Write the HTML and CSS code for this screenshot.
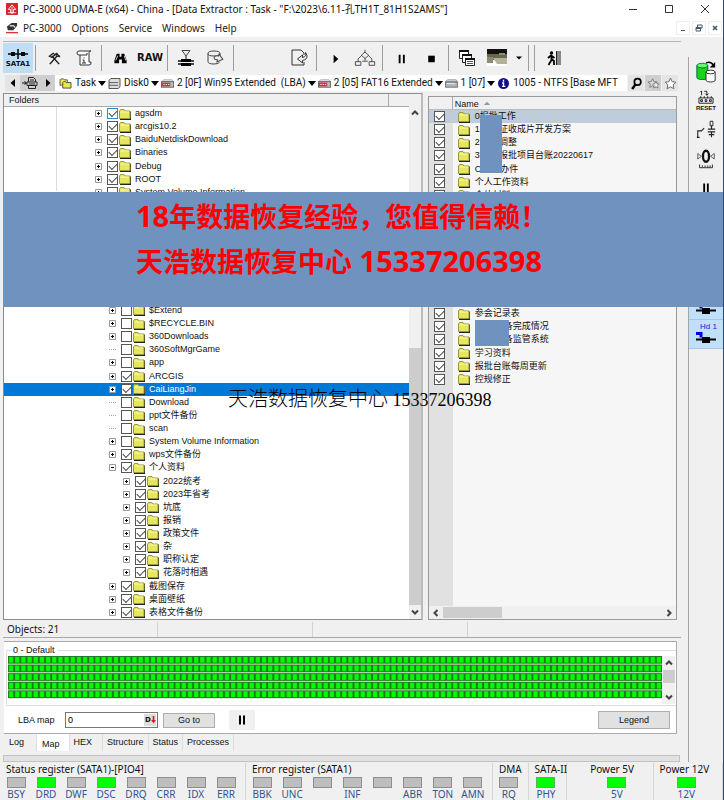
FILE: index.html
```html
<!DOCTYPE html>
<html lang="zh-CN">
<head>
<meta charset="utf-8">
<title>PC-3000 UDMA-E</title>
<link rel="stylesheet" href="styles.css">
</head>
<body>
<svg class="defs" aria-hidden="true">
  <symbol id="folder" viewBox="0 0 12 12"><path d="M1 11.5h10.500V3.500" fill="none" stroke="#222" stroke-width="1.200"/><path d="M.5 10.500V3l1-1.500h3.500l1 1.500h5v7.500z" fill="#e6e75c" stroke="#99993c"/><path d="M1.500 4h8.500" stroke="#fcfcae"/></symbol>
  <symbol id="pause" viewBox="0 0 12 12"><path d="M3 1.500h2v9H3zM7 1.500h2v9H7z"/></symbol>
  <symbol id="drive" viewBox="0 0 14 10"><path d="M3 1h9l1.500 2H.5z" fill="#ddd" stroke="#777" stroke-width=".7"/><path d="M.5 3.500h13V9H.5z" fill="#b5b5b5" stroke="#555" stroke-width=".8"/><path d="M2 5h9" stroke="#eee"/></symbol>
  <symbol id="part" viewBox="0 0 14 10"><path d="M3 1h9l1.500 2H.5z" fill="#eee" stroke="#888" stroke-width=".7"/><rect x=".5" y="3" width="13" height="6" fill="#bbb" stroke="#666"/><rect x="1" y="4" width="9" height="4" fill="#c33"/><path d="M2.500 6h1.500M5 6h1.500M7.500 6h1.500" stroke="#fff"/></symbol>
  <symbol id="plug" viewBox="0 0 24 14"><path d="M2 2.500h5v4" fill="none" stroke="#0000dd" stroke-width="3"/><path d="M2 8.500h20" stroke="#000" stroke-width="2"/><rect x="8" y="6" width="8" height="6"/></symbol>
</svg>
<div class="window">
  <header class="titlebar">
    <svg class="logo" viewBox="0 0 13 13"><rect width="13" height="13" rx="1" fill="#d8242c"/><path d="M6.500 2l4 5H8v3.500H5V7H2.500z" fill="none" stroke="#fff"/><path d="M6.500 4v8M2 10.500h9" stroke="#fff" stroke-width=".8"/></svg>
    <h1>PC-3000 UDMA-E (x64) - China - [Data Extractor : Task - "F:\2023\6.11-孔TH1T_81H1S2AMS"]</h1>
    <div class="winbtns">
      <button aria-label="Minimize"><svg viewBox="0 0 10 10"><path d="M1 5.500h8"/></svg></button>
      <button aria-label="Maximize"><svg viewBox="0 0 10 10"><path d="M1.500 1.500h7v7h-7z"/></svg></button>
      <button aria-label="Close"><svg viewBox="0 0 10 10"><path d="M1 1l8 8M9 1l-8 8"/></svg></button>
    </div>
  </header>
  <nav class="menubar">
    <svg class="logo" viewBox="0 0 13 13"><path d="M1 5l5-4h6v3L8 9H2z" fill="#333"/><path d="M4 4h4l2 2" stroke="#ccc" fill="none" stroke-width="1.500"/><path d="M0 11.500h13" stroke="#d33" stroke-width="1.500"/></svg>
    <a href="#">PC-3000</a><a href="#">Options</a><a href="#">Service</a><a href="#">Windows</a><a href="#">Help</a>
    <div class="mdibtns">
      <button aria-label="Minimize child"><svg viewBox="0 0 10 10"><path d="M3 7.500h4"/></svg></button>
      <button aria-label="Restore child"><svg viewBox="0 0 10 10"><path d="M3.500 4V2h4.500v3H7M2 4.500h4.500v3.500H2zM2 5.500h4"/></svg></button>
      <button aria-label="Close child"><svg viewBox="0 0 10 10"><path d="M3 3l4 4M7 3l-4 4" stroke-width="1.500"/></svg></button>
    </div>
  </nav>
  <div class="body">
    <main class="main">
      <div class="toolbar">
        <button class="active sata"><svg viewBox="0 0 24 12"><path d="M2 6h20M12 1v10" stroke="#000" stroke-width="1.500"/><path d="M5 4h4v4H5zM15 4h4v4h-4z"/></svg><span>SATA1</span></button>
        <i></i>
        <button aria-label="Tools"><svg viewBox="0 0 16 16"><path d="M3 14l8-9M13 14L5 5" stroke="#222" stroke-width="1.600"/><path d="M2.500 5.500l4-3 2 1.500-3 3zM10 5l-.5-3M10.500 5.500L14 6M10 2l1.500 2 2 1.500" fill="none" stroke="#222" stroke-width="1.400"/></svg></button>
        <button aria-label="Script" class="lg"><svg viewBox="0 0 18 18"><path d="M5 6V16h9q2.500 0 2-3h-2V3.500Q14 2 16 2H4Q2 2 2 4t2 2h8V4" fill="#fff" stroke="#333"/><path d="M9 8.500v1M7.500 11H9v3M7 14h4" stroke="#333" fill="none"/></svg></button>
        <i></i>
        <button aria-label="Find"><svg viewBox="0 0 16 16"><path d="M4 3h3v3h2V3h3l2.500 7v3h-5V9h-3v4h-5v-3z"/><path d="M5 5l-2 5M12 5l1.500 5" stroke="#ddd"/></svg></button>
        <button class="raw">RAW</button>
        <i></i>
        <button aria-label="Map builder" class="lg"><svg viewBox="0 0 18 18"><path d="M5 1.500h8L9 7z" fill="#eee" stroke="#444"/><path d="M9 7v3" stroke="#111"/><path d="M1 12h16M1 15h16" stroke="#111" stroke-width="1.500"/><path d="M4 10h10v3H4zM4 14h10v3H4z"/></svg></button>
        <button aria-label="Image" class="lg"><svg viewBox="0 0 18 18"><path d="M1 4.500v8q0 2.500 6 2.500 3.500 0 5.500-1.500M1 4.500Q1 2 7 2t6 2.500Q13 7 7 7T1 4.500M13 4.500V7" fill="none" stroke="#444"/><path d="M7 9.500Q8 7 11 7V5l5 4-5 4v-2H8z" transform="rotate(15 11 9)" fill="#eee" stroke="#444"/></svg></button>
        <i></i><span class="space"></span>
        <button aria-label="Export" class="lg"><svg viewBox="0 0 18 18"><path d="M14 6V4l-3-3H2v15h12v-3" fill="none" stroke="#333"/><path d="M15.500 3.500q1.500 4-3 5V6L7.500 10l5 4v-2.500q5-1 4.500-5z" fill="#eee" stroke="#333"/></svg></button>
        <i></i>
        <button aria-label="Run"><svg viewBox="0 0 16 16"><path d="M6 4l5 4.500L6 13z"/></svg></button>
        <button aria-label="Flow" class="xl"><svg viewBox="0 0 24 18"><path d="M12 0v3M12 9v3M1.500 13h6v4h-6zM16.500 13h6v4h-6zM4.500 13V10l4-4M19.500 13V10l-4-4M8 6l4-3.500L16 6l-4 3.500zM9 12.500h6" fill="none" stroke="#444"/></svg></button>
        <i></i>
        <button aria-label="Pause"><svg viewBox="0 0 16 16"><path d="M5 4h2v9H5zM9.500 4h2v9h-2z"/></svg></button>
        <button aria-label="Stop"><svg viewBox="0 0 16 16"><path d="M4.500 5h7v7h-7z"/></svg></button>
        <i></i>
        <button aria-label="Windows" class="lg"><svg viewBox="0 0 18 18"><g fill="#fff" stroke="#222"><path d="M1.500 1.500h9v8h-9z"/><path d="M4.500 5.500h9v8h-9z"/><path d="M7.500 9.500h9v7h-9z"/></g><path d="M1 2h10M4 6h10M7 10h10" stroke="#111" stroke-width="2"/><path d="M9 12.500h6M9 14.500h6" stroke="#555"/></svg></button>
        <button aria-label="Picture" class="xl"><svg viewBox="0 0 20 20"><path d="M0 2h20v16H0z" fill="#fff"/><path d="M0 1h20v6H0z" fill="#111"/><path d="M0 6h20v6H0z" fill="#68684a"/><path d="M0 9h6v6H0z" fill="#8c8c70"/><path d="M6 10h14v6H10z" fill="#b2b29a"/><path d="M12 5h6v2h-6z" fill="#8d8d76"/></svg></button>
        <button class="narrow" aria-label="Picture options"><svg viewBox="0 0 6 6"><path d="M0 1.500h6L3 4.500z"/></svg></button>
        <i></i><i></i>
        <button aria-label="Exit" class="lg"><svg viewBox="0 0 18 18"><path d="M13 2h4v14h-4z" fill="#888"/><path d="M12.500 2v14" stroke="#222"/><circle cx="7.500" cy="4" r="1.700"/><path d="M7.500 6v5l-3 5M7.500 10l2.500 2v4M4 9l3-2.500L10.500 9" stroke="#000" stroke-width="1.800" fill="none"/></svg></button>
      </div>
      <div class="address">
        <button aria-label="Back"><svg viewBox="0 0 10 10"><path d="M7 1v8L2.500 5z"/></svg></button>
        <button class="dark wide" aria-label="History"><svg viewBox="0 0 16 12"><path d="M0 6h4M2.500 4.500L4.500 6 2.500 7.500" stroke="#111" fill="none"/><path d="M6.500 5V.500h5l2 2V5M6.500 8v3.500h7V8M5 5h10v3.500H5zM8 3h4M7 7h6" fill="none" stroke="#222"/></svg></button>
        <button class="dark" aria-label="Forward"><svg viewBox="0 0 10 10"><path d="M3 1v8l4.500-4z"/></svg></button>
        <ol class="crumbs">
          <li><svg viewBox="0 0 14 12"><path d="M1 8V2l1-1h3l1 1h3v5z" fill="#eae74f" stroke="#555"/><path d="M4 11V5l1-1h2l1 1h5v6z" fill="#eae74f" stroke="#444"/></svg>Task<b></b></li>
          <li><svg viewBox="0 0 14 12"><path d="M3 .5h10v9l-2 2H1v-9z" fill="#ddd" stroke="#444"/><path d="M1 5h10M1 8h10" stroke="#555"/></svg>Disk0<b></b></li>
          <li><svg viewBox="0 0 14 10"><use href="#part"/></svg>2 [0F] Win95 Extended&nbsp; (LBA)<b></b></li>
          <li><svg viewBox="0 0 14 10"><use href="#part"/></svg>2 [05] FAT16 Extended<b></b></li>
          <li><svg viewBox="0 0 14 10"><use href="#drive"/></svg>1 [07]<b></b></li>
          <li><svg viewBox="0 0 12 12"><circle cx="6" cy="6" r="6" fill="#10108c"/><path d="M6 2v2M4.500 5.500H6V9M4.500 9.200h3.500" stroke="#fff" stroke-width="1.500" fill="none"/></svg>1005 - NTFS [Base MFT</li>
        </ol>
        <button class="tool" aria-label="Search"><svg viewBox="0 0 12 12"><circle cx="7" cy="4.500" r="3" fill="none" stroke="#000" stroke-width="1.500"/><path d="M5 7L2 11" stroke="#000" stroke-width="2.200"/></svg></button>
        <button class="tool dark" aria-label="Favorites"><svg viewBox="0 0 14 12"><path d="M6 1l1.500 3 3.500.5-2.500 2.300.6 3.400L6 8.500l-3 1.700.6-3.400L1 4.500 4.500 4z" fill="#ddd" stroke="#666" stroke-width=".8"/><path d="M9.500 4l1.200 2.200 2.500.3-1.800 1.800.4 2.600-2.300-1.200-2.300 1.200.4-2.600L6 6.500l2.400-.3z" fill="#eee" stroke="#666" stroke-width=".8"/></svg></button>
        <button class="tool" aria-label="Add favorite"><svg viewBox="0 0 12 12"><path d="M6 1l1.500 3.300 3.500.5-2.500 2.400.6 3.600L6 9.100l-3.100 1.700.6-3.600L1 4.800l3.500-.5z" fill="#fff" stroke="#667" stroke-width=".9"/></svg></button>
      </div>
      <div class="panels">
        <section class="folders">
          <div class="tree-col">
            <div class="tree-head"><span>Folders</span></div>
            <div class="tree" id="tree"></div>
          </div>
          <div class="vscroll"><svg viewBox="0 0 8 8"><path d="M1 5.500l3-3 3 3"/></svg><span class="before"></span><span class="thumb"></span><svg viewBox="0 0 8 8"><path d="M1 2.500l3 3 3-3"/></svg></div>
        </section>
        <section class="files">
          <div class="files-head"><span></span><span>Name <svg viewBox="0 0 8 5"><path d="M0 5l4-4 4 4z"/></svg></span></div>
          <div class="list" id="list"></div>
          <div class="hscroll"><svg viewBox="0 0 8 8"><path d="M5.500 1l-3 3 3 3"/></svg><span class="thumb"></span><svg viewBox="0 0 8 8"><path d="M2.500 1l3 3-3 3"/></svg></div>
        </section>
      </div>
      <div class="statusbar"><span>Objects: 21</span><span></span><span></span><span></span></div>
      <section class="map">
        <fieldset>
          <legend>0 - Default</legend>
          <div class="map-row">
            <svg class="cells" viewBox="0 0 636 45" preserveAspectRatio="none"><defs><pattern id="cell" width="6" height="9" patternUnits="userSpaceOnUse"><rect width="6" height="9" fill="#dcebd6"/><rect width="6" height="8" fill="#1f7a1f"/><rect x="1" y="1" width="4" height="6" fill="#00ff00"/></pattern></defs><rect width="636" height="45" fill="url(#cell)"/></svg>
            <div class="vscroll"><svg viewBox="0 0 8 8"><path d="M1 5.500l3-3 3 3"/></svg><span class="thumb"></span><span class="rest"></span><svg viewBox="0 0 8 8"><path d="M1 2.500l3 3 3-3"/></svg></div>
          </div>
        </fieldset>
        <div class="lba">
          <label for="lba">LBA map</label>
          <div class="field"><input id="lba" type="text" value="0"><button aria-label="Decimal"><span>D</span><svg viewBox="0 0 6 10"><path d="M2 0h2v5h2L3 9 0 5h2z"/></svg></button></div>
          <button class="btn">Go to</button>
          <button class="pausebtn" aria-label="Pause map"><svg viewBox="0 0 12 12"><use href="#pause"/></svg></button>
          <button class="btn legendbtn">Legend</button>
        </div>
      </section>
      <div class="tabs"><button>Log</button><button class="on">Map</button><button>HEX</button><button>Structure</button><button>Status</button><button>Processes</button></div>
      <div class="splitter"></div>
    </main>
    <aside class="side">
      <button aria-label="Databases"><svg viewBox="0 0 24 24"><path d="M2 5v13c0 3 12 3 12 0V5z" fill="#19d419" stroke="#064"/><ellipse cx="8" cy="5" rx="6" ry="2.500" fill="#6f6" stroke="#064"/><path d="M12 12v9c0 2.500 10 2.500 10 0v-9z" fill="#fff" stroke="#222"/><ellipse cx="17" cy="12" rx="5" ry="2" fill="#fff" stroke="#222"/><path d="M12 2q6-2 8 3" fill="none" stroke="#000" stroke-width="1.500"/><path d="M22 1v6h-6z"/></svg></button>
      <button aria-label="Reset" class="reset"><svg viewBox="0 0 20 17"><path d="M5 1v5M3.500 2.500L5 1M8 1.500h3V6M9 4l2 2 2-2M2 9h16v6H2zM4 11v2h2v-2zM9 11v2h2v-2zM14 11v2h2v-2zM4 7v2M8 7v2M12 7v2M16 7v2" fill="none" stroke="#111"/></svg><span>RESET</span></button>
      <button aria-label="Signal"><svg viewBox="0 0 24 24"><path d="M3 20v-7h4l3-3M2 20h3M14 11h8M14 14h8M18 7v4M18 14v6M15 17h6" fill="none" stroke="#222" stroke-width="1.200"/><path d="M16.500 2.500h3v5h-3z" fill="none" stroke="#222"/></svg></button>
      <button aria-label="Zero"><svg viewBox="0 0 24 24"><ellipse cx="12" cy="9" rx="3.300" ry="6" fill="none" stroke="#111" stroke-width="2.500"/><path d="M3 6l4 3-4 3zM21 6l-4 3 4 3z" fill="none" stroke="#555"/><path d="M5 18v3.500h14V18M8 19v2M11 19v2M14 19v2M16.500 19v2" fill="none" stroke="#222"/></svg></button>
      <button aria-label="Pause device"><svg viewBox="0 0 24 24"><path d="M9 7h2v10H9zM13 7h2v10h-2z"/></svg></button>
      <span class="gap"></span>
      <button class="hd" aria-label="Hd 0"><span></span><svg viewBox="0 0 24 14"><use href="#plug"/></svg></button>
      <button class="hd"><span>Hd 1</span><svg viewBox="0 0 24 14"><use href="#plug"/></svg></button>
    </aside>
  </div>
  <footer class="registers" id="registers"></footer>
  <div class="banner"><p><em>18</em>年数据恢复经验，您值得信赖！</p><p>天浩数据恢复中心<em> 15337206398</em></p></div>
  <p class="watermark">天浩数据恢复中心<em> 15337206398</em></p>
</div>
<script src="app.js"></script>
</body>
</html>
```
FILE: styles.css
```css
* { box-sizing: border-box; }
body { margin: 0; background: #f0f0f0; color: #111; font: 10px/14px "Noto Sans", "Noto Sans CJK SC", sans-serif; }
button { border: 0; padding: 0; background: none; font: inherit; color: inherit; }
p, h1 { margin: 0; }
em { font-style: normal; }
.defs { position: absolute; width: 0; height: 0; }
.window { position: relative; display: flex; flex-direction: column; min-height: 100vh; border-right: 1px solid #2b4a7c; overflow: hidden; }

.titlebar, .menubar { display: flex; align-items: center; background: #fff; padding-left: 6px; }
.titlebar { height: 18px; }
.menubar { height: 19px; }
.logo { width: 12px; height: 12px; flex: none; }
.titlebar h1 { flex: 1; margin-left: 5px; font-size: 10px; font-weight: 400; white-space: nowrap; }
.winbtns { display: flex; }
.winbtns button { width: 36px; height: 18px; }
.winbtns svg, .mdibtns svg { width: 10px; height: 10px; fill: none; stroke: #333; display: block; margin: auto; }
.menubar a { color: #222; text-decoration: none; margin-left: 5px; margin-right: 5px; }
.menubar .mdibtns { margin-left: auto; display: flex; gap: 2px; padding-right: 1px; }
.mdibtns button { width: 14px; height: 14px; border: 1px solid #eee; }
.mdibtns svg { stroke: #456; }

.body { flex: 1; display: flex; margin-top: 4px; }
.main { flex: 1; min-width: 0; display: flex; flex-direction: column; padding-left: 3px; }
.side { width: 35px; margin: 16px 0 0 7px; border-left: 1px solid #a5a5a5; display: flex; flex-direction: column; }

.toolbar { display: flex; align-items: stretch; height: 32px; border-top: 1px solid #b5b5b5; padding-top: 1px; }
.toolbar button { width: 30px; display: flex; flex-direction: column; align-items: center; justify-content: center; }
.toolbar svg { width: 15px; height: 15px; }
.toolbar .lg svg { width: 18px; height: 18px; }
.toolbar .xl svg { width: 22px; height: 20px; }
.toolbar i { width: 1px; margin: 2px 3px 2px 2px; background: #9c9c9c; }
.toolbar .space { width: 47px; }
.toolbar .active { background: #bfddf5; }
.toolbar .sata { font: bold 7px/8px "DejaVu Sans", sans-serif; }
.toolbar .sata svg { width: 24px; height: 12px; }
.toolbar .raw { font: bold 10px/14px "DejaVu Sans", sans-serif; }
.toolbar .narrow { width: 14px; }
.toolbar .narrow svg { width: 6px; height: 6px; }

.address { display: flex; align-items: center; height: 20px; padding: 2px 3px 2px 2px; }
.address button { width: 15px; height: 16px; flex: none; display: flex; align-items: center; justify-content: center; background: #e4e4e4; }
.address button.dark { background: #cfcfcf; }
.address button.wide { width: 20px; }
.address button svg { width: 10px; height: 10px; }
.address button.wide svg { width: 16px; height: 12px; }
.address button.tool { width: 16px; margin-left: 1px; }
.address button.tool svg { width: 13px; height: 13px; }
.crumbs { flex: 1; min-width: 0; overflow: hidden; display: flex; align-items: center; height: 16px; margin: 0; padding: 0 0 0 4px; list-style: none; background: #fff; font-family: Roboto, sans-serif; white-space: nowrap; }
.crumbs li { display: flex; align-items: center; }
.crumbs svg { width: 13px; height: 11px; margin: 0 3px 0 0; }
.crumbs b { border: 4px solid transparent; border-top: 5px solid #000; border-bottom: 0; margin: 0 2px; }

.panels { flex: 1; display: flex; gap: 5px; padding-right: 4px; }
.folders, .files, .map, .tabs { font: 9px/13px "Liberation Sans", "Noto Sans CJK SC", sans-serif; }
.folders { flex: 420; min-width: 0; display: flex; border: 1px solid #8c8c8c; border-width: 1px 2px 1px 1px; border-right-color: #bbb; background: #fff; }
.tree-col { flex: 1; min-width: 0; display: flex; flex-direction: column; }
.tree-head { height: 13px; background: #f0f0f0; border-bottom: 1px solid #aaa; display: flex; }
.tree-head span { flex: 1; margin-right: 20px; padding-left: 5px; border-right: 1px solid #aaa; }
.tree { flex: 1; display: flex; flex-direction: column; background: linear-gradient(#dcdcdc, #dcdcdc) 52px 0 / 1px 84px no-repeat; }
.rows { display: flex; flex-direction: column; flex: var(--n) 0 0px; min-height: 0; }
.node { flex: 1 0 0px; min-height: 0; display: flex; align-items: center; white-space: nowrap; }
.level1 { padding-left: 91px; }
.level2 { padding-left: 105px; }
.level3 { padding-left: 119px; }
.twig { width: 7px; height: 7px; margin-right: 5px; flex: none; }
.twig.none { border-top: 1px dotted #aaa; height: 1px; }
.folder { width: 12px; height: 12px; flex: none; }
.node .folder { margin: 0 4px 0 1px; }
.node.selected { background: #0078d7; color: #fff; }
.node label { flex: 1; }
input[type="checkbox"] { appearance: none; flex: none; width: 11px; height: 11px; margin: 0; border: 1px solid #555; background: #fff; position: relative; }
input[type="checkbox"]:checked::before { content: ""; position: absolute; left: 1px; top: 1px; width: 7px; height: 4px; border: solid #444; border-width: 0 0 1px 1px; transform: rotate(-45deg); }
.first input[type="checkbox"] { border-color: #2a8ae0; }
.vscroll { width: 12px; background: #f0f0f0; display: flex; flex-direction: column; align-items: center; }
.vscroll svg, .hscroll svg { width: 8px; height: 8px; margin: 3px; fill: none; stroke: #444; stroke-width: 2; flex: none; }
.folders .vscroll { padding-top: 12px; }
.before { flex: 228; }
.vscroll .thumb { flex: 257; width: 12px; background: #cdcdcd; }

.files { flex: 249; min-width: 0; display: flex; flex-direction: column; margin-top: 3px; border: 1px solid #999; background: #f6f6f6; }
.files-head { display: flex; height: 13px; background: #f0f0f0; border-bottom: 1px solid #bbb; }
.files-head span:first-child { width: 24px; border-right: 1px solid #aaa; }
.files-head span:last-child { padding-left: 2px; line-height: 14px; }
.files-head svg { width: 8px; height: 4px; fill: #999; margin-left: 2px; vertical-align: 2px; }
.list { flex: 1; background: linear-gradient(#e1e1e1, #e1e1e1) 0 0 / 24px 100% no-repeat; }
.list-rows { height: 276px; display: flex; flex-direction: column; }
.item { flex: 1 0 0px; min-height: 0; display: flex; align-items: center; padding-left: 5px; white-space: nowrap; }
.item .folder { margin: 0 5px 0 13px; }
.item.current { background: #bfcddb; }
.item label { position: relative; }
.gapbox { display: inline-block; width: 19px; }
.gapbox.broad { width: 29px; }
.mask { position: absolute; z-index: 1; background: #6f92be; }
.mask.tall { left: 5px; top: 5px; width: 22px; height: 58px; }
.mask.wide { left: 0; top: 0; width: 34px; height: 26px; }
.hscroll { height: 13px; display: flex; align-items: center; background: #f0f0f0; }
.hscroll .thumb { width: 59px; height: 11px; background: #cdcdcd; }
.hscroll svg:last-child { margin-left: auto; }

.statusbar { display: flex; height: 17px; margin-top: 1px; padding-top: 1px; border-bottom: 1px solid #a8a8a8; }
.statusbar span { width: 155px; padding-left: 4px; border-right: 1px solid #d2d2d2; }
.statusbar span:last-child { flex: 1; border: 0; }

.map { margin: 3px 4px 0 1px; padding: 2px 0 3px; background: #fff; border: 1px solid #aaa; border-left: 0; }
.map fieldset { min-width: 0; margin: 0 0 0 2px; padding: 0 1px 1px; border: 1px solid #ddd; border-right: 0; }
.map legend { padding: 0 3px; margin-left: 2px; line-height: 12px; }
.map-row { display: flex; height: 48px; }
.cells { flex: 1; min-width: 0; height: 43px; }
.map-row .vscroll { width: 13px; }
.map-row .vscroll .thumb { flex: none; height: 13px; }
.rest { flex: 1; }
.lba { display: flex; align-items: center; padding: 4px 6px 0 14px; height: 24px; }
.lba label { width: 47px; }
.field { display: flex; width: 93px; height: 16px; border: 1px solid #777; background: #fff; }
.field input { flex: 1; min-width: 0; border: 0; padding: 0 2px; font: inherit; background: none; }
.field button { display: flex; align-items: center; width: 12px; margin: 1px; padding-left: 1px; background: #ddd; font: bold 7px/10px "DejaVu Sans", sans-serif; }
.field svg { width: 5px; height: 8px; fill: #e01818; }
.btn { width: 52px; height: 15px; margin-left: 5px; background: #e1e1e1; border: 1px solid #adadad; }
.pausebtn { width: 26px; height: 20px; margin-left: 14px; background: #f0f0f0; }
.pausebtn svg { width: 12px; height: 12px; display: block; margin: auto; }
.legendbtn { width: 72px; height: 18px; margin-left: auto; }

.tabs { display: flex; height: 17px; padding-left: 1px; }
.tabs button { padding: 0 4px; border-right: 1px solid #ddd; }
.tabs button:first-child { padding: 0 12px 0 5px; }
.tabs button.on { padding: 3px 9px 0 5px; background: #fff; }
.tabs button:nth-child(3) { padding-right: 10px; }
.splitter { height: 7px; margin: 4px 1px 0 0; background: #e2e2e2; border: 1px solid #c2c2c2; }

.side button { width: 34px; height: 29px; display: flex; flex-direction: column; align-items: center; justify-content: center; }
.side svg { width: 22px; height: 24px; flex: none; }
.side .reset svg { width: 20px; height: 15px; }
.side .reset { font: bold 6px/6px "Liberation Sans", sans-serif; }
.side .gap { height: 89px; }
.side .hd { background: #bfe0f8; border-bottom: 1px solid #a2c8e8; color: #1616dd; font: 8px/8px "Liberation Sans", sans-serif; }
.side .hd span { align-self: flex-end; height: 8px; padding-right: 6px; }
.side .hd svg { width: 24px; height: 14px; }

.registers { display: flex; height: 37px; margin-top: 1px; line-height: 12px; }
.group { min-width: 0; border-right: 1px solid #d6d6d6; }
.group h2 { margin: 0 0 2px 6px; font-size: 10px; line-height: 12px; font-weight: 400; white-space: nowrap; }
.leds { display: flex; padding: 0 4px 0 1px; }
.led { flex: 1; min-width: 0; display: flex; flex-direction: column; align-items: center; color: #2f5590; }
.led::before { content: ""; width: 17px; height: 9px; background: #bebebe; border: 1px solid #8e8e8e; }
.led.on::before { background: #00ff00; border-color: #5bb45b; }
.spacer { flex: 17; }

.banner { position: absolute; top: 192px; left: 3px; right: 0; height: 115px; padding: 2px 0 0 133px; background: #6f92be; color: #f00; font: bold 27px/45px "Noto Sans", "Noto Sans CJK SC", sans-serif; white-space: nowrap; }
.banner em { font-size: 29px; line-height: 1; }
.watermark { position: absolute; left: 228px; top: 385px; color: #000; font: 20px/26px "Noto Sans CJK SC", sans-serif; font-weight: 300; white-space: nowrap; }
.watermark em { font: 18px/18px "Liberation Serif", serif; }
```
FILE: app.js
```js
const folderIcon = '<svg class="folder"><use href="#folder"/></svg>';
const twig = (kind) => kind === '.'
  ? '<span class="twig none"></span>'
  : `<svg class="twig" viewBox="0 0 7 7"><path d="M.5.5h6v6h-6z" fill="#fff" stroke="#999"/><path d="M2 3.500h3${kind === '+' ? 'M3.500 2v3' : ''}" stroke="#000"/></svg>`;

// [level, twig, checked, name]
const top1 = ['agsdm', 'arcgis10.2', 'BaiduNetdiskDownload', 'Binaries', 'Debug', 'ROOT']
  .map((name) => [1, '+', 1, name]);
top1.push([1, '+', 0, 'System Volume Information']);
const lower = [
  [2, '+', 0, '$Extend'], [2, '+', 0, '$RECYCLE.BIN'], [2, '+', 0, '360Downloads'],
  [2, '.', 0, '360SoftMgrGame'], [2, '+', 0, 'app'], [2, '+', 1, 'ARCGIS'],
  [2, '+', 1, 'CaiLiangJin'], [2, '.', 0, 'Download'], [2, '.', 0, 'ppt文件备份'],
  [2, '.', 0, 'scan'], [2, '+', 0, 'System Volume Information'], [2, '+', 1, 'wps文件备份'],
  [2, '-', 1, '个人资料'], [3, '+', 1, '2022统考'], [3, '+', 1, '2023年省考'],
  [3, '+', 1, '坑底'], [3, '+', 1, '报销'], [3, '+', 1, '政策文件'], [3, '+', 1, '杂'],
  [3, '+', 1, '职称认定'], [3, '+', 1, '花落时相遇'], [2, '+', 1, '截图保存'],
  [2, '+', 1, '桌面壁纸'], [2, '+', 1, '表格文件备份'],
];
let id = 0;
const node = ([level, kind, checked, name]) => {
  id += 1;
  const cls = (name === 'CaiLiangJin' ? ' selected' : '') + (id === 1 ? ' first' : '');
  return `<div class="node level${level}${cls}">${twig(kind)}<input type="checkbox" id="n${id}"${checked ? ' checked' : ''}>${folderIcon}<label for="n${id}">${name}</label></div>`;
};
const rows = (n, html) => `<div class="rows" style="--n:${n}">${html}</div>`;
document.getElementById('tree').innerHTML =
  rows(7, top1.map(node).join('')) + rows(8, '') + rows(24, lower.map(node).join(''));

const item = (name, mask = '') => {
  id += 1;
  return `<div class="item${name.startsWith('0报') ? ' current' : ''}"><input type="checkbox" id="n${id}" checked>${folderIcon}<label for="n${id}">${name}${mask}</label></div>`;
};
const gap = '<span class="gapbox"></span>';
const broadGap = '<span class="gapbox broad"></span>';
const files1 = [
  item('0报批工作', '<span class="mask tall"></span>'), item(`1${gap}征收成片开发方案`),
  item(`2${gap}调整`), item(`3${gap}报批项目台账20220617`), item(`C${gap}办件`),
  item('个人工作资料'), item('个体材料'),
];
const files2 = [
  item('参会记录表'), item(`${broadGap}备完成情况`, '<span class="mask wide"></span>'),
  item(`${broadGap}备监管系统`), item('学习资料'), item('报批台账每周更新'), item('控规修正'),
];
document.getElementById('list').innerHTML =
  `<div class="list-rows">${rows(7, files1.join(''))}${rows(8, '')}${rows(6, files2.join(''))}</div>`;

const groups = [
  ['Status register (SATA1)-[PIO4]', 247, ['BSY', '*DRD', 'DWF', '*DSC', 'DRQ', 'CRR', 'IDX', 'ERR']],
  ['Error register (SATA1)', 248, ['BBK', 'UNC', '', 'INF', '', 'ABR', 'TON', 'AMN']],
  ['DMA', 35, ['RQ']], ['SATA-II', 38, ['*PHY']], null,
  ['Power 5V', 69, ['*5V']], ['Power 12V', 69, ['*12V']],
];
document.getElementById('registers').innerHTML = groups.map((g) => {
  if (!g) return '<span class="spacer"></span>';
  const leds = g[2].map((s) => `<span class="led${s[0] === '*' ? ' on' : ''}">${s.replace('*', '')}</span>`);
  return `<div class="group" style="flex:${g[1]} 0 0px"><h2>${g[0]}</h2><div class="leds">${leds.join('')}</div></div>`;
}).join('');
```
